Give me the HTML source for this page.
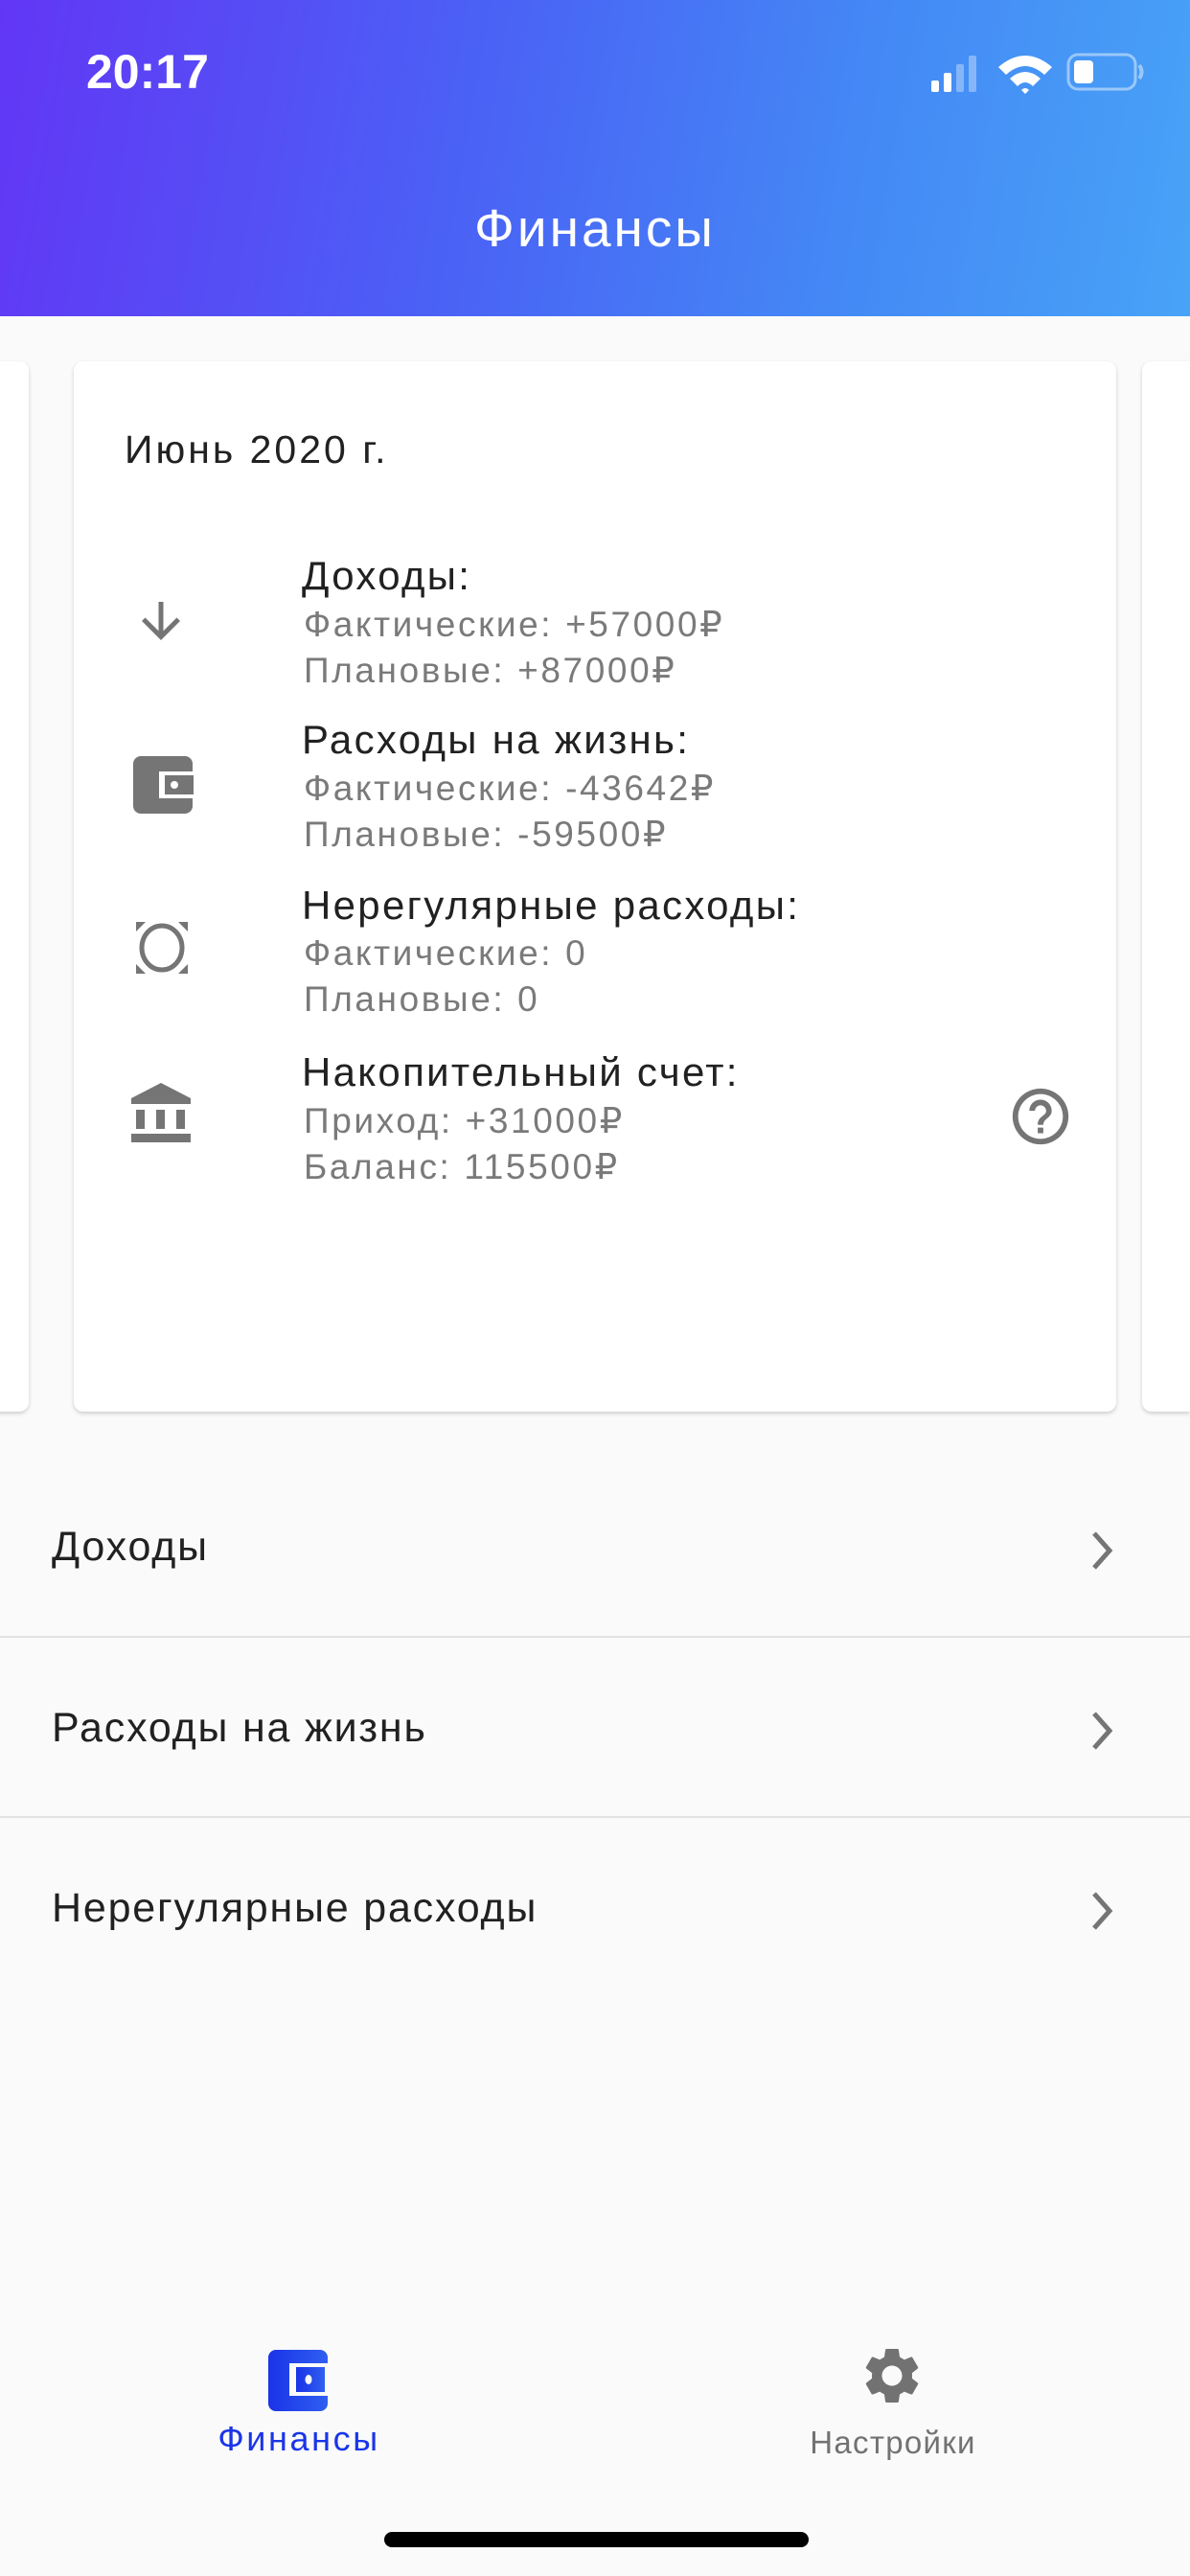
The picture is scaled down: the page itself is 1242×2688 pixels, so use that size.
<!DOCTYPE html>
<html><head><meta charset="utf-8"><style>
*{margin:0;padding:0;box-sizing:border-box}
body{width:1242px;height:2688px;background:#fafafa;font-family:"Liberation Sans",sans-serif;position:relative;overflow:hidden}
.hdr{position:absolute;left:0;top:0;width:1242px;height:330px;background:linear-gradient(100deg,#6236f5 0%,#4a62f5 40%,#4487f5 70%,#48a3f7 100%)}
.t{position:absolute;white-space:nowrap}
.card{position:absolute;left:77px;top:377px;width:1088px;height:1096px;background:#fff;border-radius:10px;box-shadow:0 2px 4px rgba(0,0,0,.18)}
.side{position:absolute;top:377px;width:50px;height:1096px;background:#fff;box-shadow:0 2px 4px rgba(0,0,0,.18)}
.ti{font-size:42px;color:#212121;letter-spacing:2.3px}
.su{font-size:37px;color:#7a7a7a;letter-spacing:2.6px}
.div{position:absolute;left:0;width:1242px;height:2px;background:#e2e2e2}
.li{font-size:43px;color:#212121;letter-spacing:1.8px}
</style></head><body>
<div class="hdr"></div>
<div class="t" style="left:90px;top:46px;font-size:50px;font-weight:bold;color:#fff">20:17</div>
<svg class="t" style="left:970px;top:52px" width="230" height="46" viewBox="0 0 230 46">
<rect x="2" y="32" width="8" height="12" rx="2" fill="#fff"/>
<rect x="15" y="24" width="8" height="20" rx="2" fill="#fff"/>
<rect x="28" y="15" width="8" height="29" rx="2" fill="#fff" opacity=".35"/>
<rect x="41" y="6" width="8" height="38" rx="2" fill="#fff" opacity=".35"/>
<path d="M72 18 Q100 -6 128 18 L120 26 Q100 8 80 26Z M84 30 Q100 16 116 30 L108 38 Q100 30 92 38Z M96 42 L100 46 L104 42 Q100 38 96 42Z" fill="#fff"/>
<rect x="145" y="5" width="70" height="36" rx="10" fill="none" stroke="#fff" stroke-opacity=".45" stroke-width="3"/>
<rect x="151" y="11" width="20" height="24" rx="4" fill="#fff"/>
<path d="M219 16 q5 7 0 14" stroke="#fff" stroke-opacity=".45" stroke-width="4" fill="none"/>
</svg>
<div class="t" style="left:0;width:1242px;text-align:center;top:206px;font-size:55px;color:#fff;letter-spacing:3px">Финансы</div>

<div class="side" style="left:-20px;border-radius:0 10px 10px 0"></div>
<div class="side" style="left:1192px;border-radius:10px 0 0 10px"></div>
<div class="card"></div>
<div class="t" style="left:130px;top:446px;font-size:41px;color:#212121;letter-spacing:3px">Июнь 2020 г.</div>

<div class="t ti" style="left:315px;top:577px">Доходы:</div>
<div class="t su" style="left:317px;top:630px">Фактические: +57000₽</div>
<div class="t su" style="left:317px;top:678px">Плановые: +87000₽</div>
<svg class="t" style="left:138px;top:618px" width="60" height="60" viewBox="0 0 24 24"><path d="M20 12l-1.41-1.41L13 16.17V4h-2v12.17l-5.58-5.59L4 12l8 8 8-8z" fill="#757575"/></svg>

<div class="t ti" style="left:315px;top:748px">Расходы на жизнь:</div>
<div class="t su" style="left:317px;top:801px">Фактические: -43642₽</div>
<div class="t su" style="left:317px;top:849px">Плановые: -59500₽</div>
<svg class="t" style="left:138px;top:787px" width="64" height="64" viewBox="0 0 64 64"><rect x="1" y="2" width="62" height="60" rx="8" fill="#757575"/><rect x="28" y="18" width="36" height="28" fill="#fff"/><rect x="34" y="22" width="30" height="20" fill="#757575"/><circle cx="44" cy="32" r="4" fill="#fff"/></svg>

<div class="t ti" style="left:315px;top:921px">Нерегулярные расходы:</div>
<div class="t su" style="left:317px;top:974px">Фактические: 0</div>
<div class="t su" style="left:317px;top:1022px">Плановые: 0</div>
<svg class="t" style="left:140px;top:960px" width="58" height="58" viewBox="0 0 58 58"><path d="M2 2h10L2 12Z M56 2H46L56 12Z M2 56h10L2 46Z M56 56H46L56 46Z" fill="#757575"/><ellipse cx="29" cy="29" rx="21" ry="23" fill="none" stroke="#757575" stroke-width="5"/></svg>

<div class="t ti" style="left:315px;top:1095px">Накопительный счет:</div>
<div class="t su" style="left:317px;top:1148px">Приход: +31000₽</div>
<div class="t su" style="left:317px;top:1196px">Баланс: 115500₽</div>
<svg class="t" style="left:135px;top:1128px" width="66" height="66" viewBox="0 0 66 66"><path d="M33 2L2 18v6h62v-6Z" fill="#757575"/><rect x="7" y="30" width="9" height="20" fill="#757575"/><rect x="28" y="30" width="9" height="20" fill="#757575"/><rect x="49" y="30" width="9" height="20" fill="#757575"/><rect x="2" y="55" width="62" height="9" fill="#757575"/></svg>
<svg class="t" style="left:1051px;top:1130px" width="70" height="70" viewBox="0 0 24 24"><path d="M11 18h2v-2h-2v2zm1-16C6.480 2 2 6.48 2 12s4.48 10 10 10 10-4.48 10-10S17.52 2 12 2zm0 18c-4.41 0-8-3.590-8-8s3.59-8 8-8 8 3.59 8 8-3.59 8-8 8zm0-14c-2.21 0-4 1.79-4 4h2c0-1.1.9-2 2-2s2 .9 2 2c0 2-3 1.75-3 5h2c0-2.25 3-2.5 3-5 0-2.21-1.79-4-4-4z" fill="#757575"/></svg>

<div class="t li" style="left:54px;top:1590px">Доходы</div>
<div class="div" style="top:1707px"></div>
<div class="t li" style="left:54px;top:1779px">Расходы на жизнь</div>
<div class="div" style="top:1895px"></div>
<div class="t li" style="left:54px;top:1967px">Нерегулярные расходы</div>
<svg class="t" style="left:1136px;top:1596px" width="30" height="44" viewBox="0 0 30 44"><path d="M6 4l16 18L6 40" stroke="#757575" stroke-width="5" fill="none"/></svg>
<svg class="t" style="left:1136px;top:1784px" width="30" height="44" viewBox="0 0 30 44"><path d="M6 4l16 18L6 40" stroke="#757575" stroke-width="5" fill="none"/></svg>
<svg class="t" style="left:1136px;top:1972px" width="30" height="44" viewBox="0 0 30 44"><path d="M6 4l16 18L6 40" stroke="#757575" stroke-width="5" fill="none"/></svg>

<svg class="t" style="left:280px;top:2452px" width="64" height="64" viewBox="0 0 64 64"><defs><linearGradient id="g" x1="0" x2="1"><stop offset="0" stop-color="#1a33e8"/><stop offset="1" stop-color="#2f5ff0"/></linearGradient></defs><rect x="0" y="0" width="62" height="64" rx="8" fill="url(#g)"/><rect x="22" y="14" width="42" height="34" fill="#fafafa"/><rect x="29" y="18" width="30" height="26" fill="url(#g)"/><ellipse cx="42" cy="31" rx="3.5" ry="5" fill="#fafafa"/></svg>
<div class="t" style="left:180px;width:264px;text-align:center;top:2524px;font-size:36px;color:#1a35e8;letter-spacing:2.6px">Финансы</div>
<svg class="t" style="left:896px;top:2444px" width="70" height="70" viewBox="0 0 24 24"><path d="M19.14 12.94c.04-.3.06-.61.06-.94 0-.32-.02-.64-.07-.94l2.03-1.58a.49.49 0 0 0 .12-.61l-1.920-3.32a.488.488 0 0 0-.59-.22l-2.39.96c-.5-.38-1.03-.7-1.62-.94l-.36-2.54a.484.484 0 0 0-.48-.41h-3.84c-.24 0-.43.17-.47.41l-.36 2.54c-.59.24-1.13.57-1.62.94l-2.39-.96c-.22-.08-.47 0-.59.22L2.74 8.87c-.12.21-.08.47.12.61l2.03 1.58c-.05.3-.09.63-.09.94s.02.64.07.94l-2.03 1.58a.49.49 0 0 0-.12.61l1.92 3.32c.12.22.37.29.59.22l2.39-.96c.5.38 1.03.7 1.62.94l.36 2.54c.05.24.24.41.48.41h3.84c.24 0 .44-.17.47-.41l.36-2.54c.59-.24 1.13-.56 1.62-.94l2.39.96c.22.08.47 0 .59-.22l1.92-3.32c.12-.22.07-.47-.12-.61l-2.01-1.58zM12 15.6c-1.98 0-3.6-1.62-3.6-3.6s1.62-3.6 3.6-3.6 3.6 1.62 3.6 3.6-1.62 3.6-3.6 3.6z" fill="#727272"/></svg>
<div class="t" style="left:800px;width:264px;text-align:center;top:2530px;font-size:33px;color:#727272;letter-spacing:1.3px">Настройки</div>
<div class="t" style="left:401px;top:2642px;width:443px;height:16px;border-radius:8px;background:#000"></div>
</body></html>
